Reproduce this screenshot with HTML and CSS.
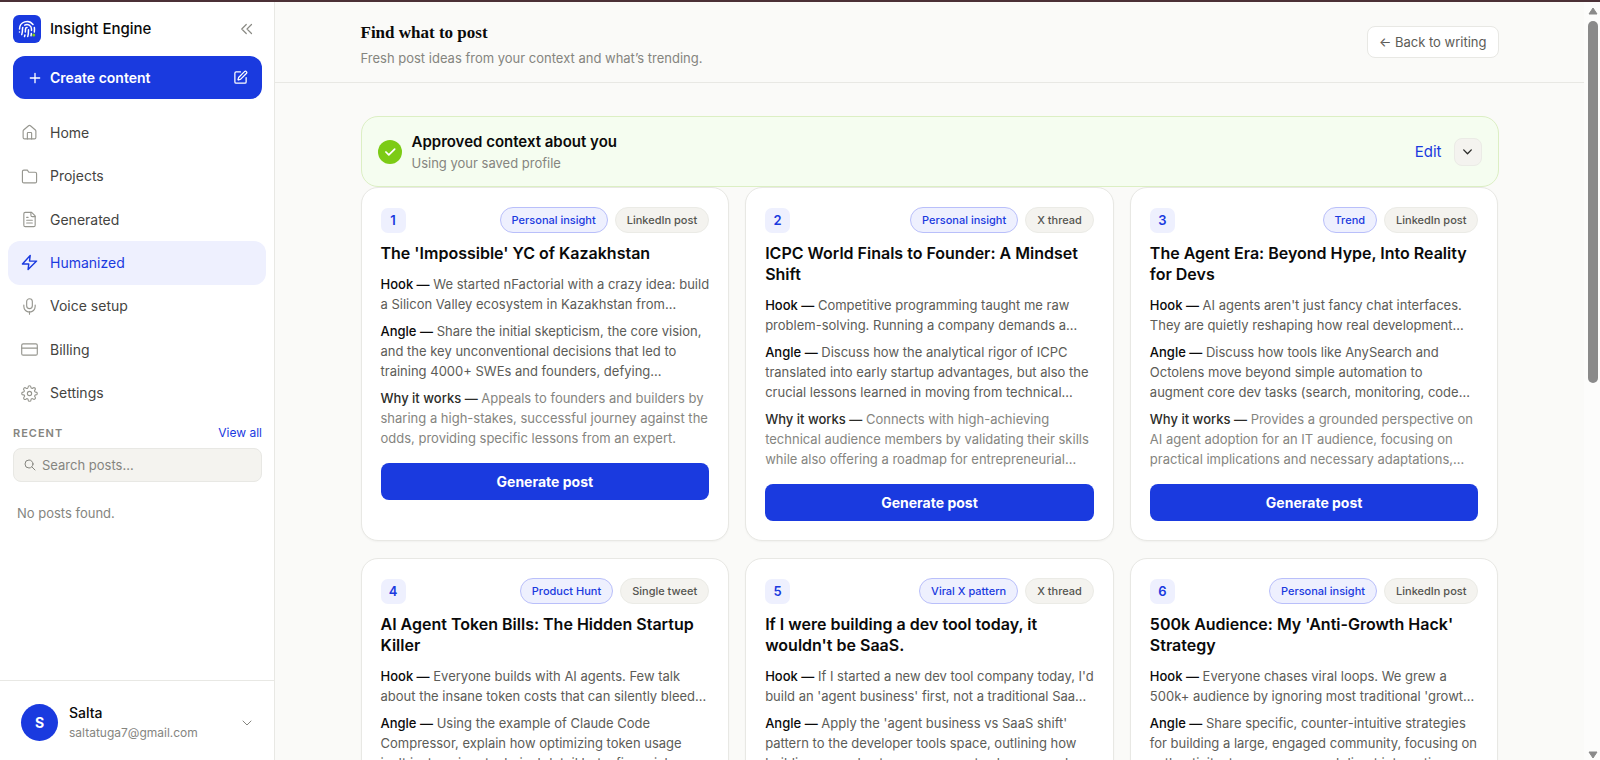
FILE: index.html
```html
<!DOCTYPE html>
<html lang="en">
  <head>
    <meta charset="UTF-8" />
    <meta name="viewport" content="width=device-width, initial-scale=1.0" />
    <title>Insight Engine - Find what to post</title>
    <link rel="stylesheet" href="styles.css" />
  </head>
  <body>
    <div class="app">
      <aside class="sidebar">
        <div class="brand">
          <span class="logo">
            <svg class="icon" width="18" height="18" viewBox="0 0 24 24" stroke-width="2">
              <path d="M12 10a2 2 0 0 0-2 2c0 1.02-.1 2.51-.26 4" />
              <path d="M14 13.12c0 2.38 0 6.38-1 8.88" />
              <path d="M17.29 21.02c.12-.6.43-2.3.5-3.02" />
              <path d="M2 12a10 10 0 0 1 18-6" />
              <path d="M2 16h.01" />
              <path d="M21.8 16c.2-2 .131-5.354 0-6" />
              <path d="M5 19.5C5.5 18 6 15 6 12a6 6 0 0 1 .34-2" />
              <path d="M8.65 22c.21-.66.45-1.32.57-2" />
              <path d="M9 6.8a6 6 0 0 1 9 5.2v2" />
              <circle class="logo-dot" cx="21" cy="20" r="1" />
            </svg>
          </span>
          <span class="brand-name">Insight Engine</span>
          <button class="icon-button" aria-label="Collapse sidebar">
            <svg class="icon" width="18" height="18" viewBox="0 0 24 24" stroke-width="1.6">
              <path d="m11 18-6-6 6-6M18 18l-6-6 6-6" />
            </svg>
          </button>
        </div>

        <button class="create-button">
          <svg class="icon" width="16" height="16" viewBox="0 0 24 24" stroke-width="2">
            <path d="M5 12h14M12 5v14" />
          </svg>
          <span>Create content</span>
          <svg class="icon" width="15" height="15" viewBox="0 0 24 24" stroke-width="2">
            <path d="M12 3H5a2 2 0 0 0-2 2v14a2 2 0 0 0 2 2h14a2 2 0 0 0 2-2v-7" />
            <path d="M18.375 2.625a1 1 0 0 1 3 3l-9.013 9.014a2 2 0 0 1-.853.505l-2.873.84a.5.5 0 0 1-.62-.62l.84-2.873a2 2 0 0 1 .506-.852z" />
          </svg>
        </button>

        <nav class="nav">
          <a href="#">
            <svg class="icon" width="17" height="17" viewBox="0 0 24 24" stroke-width="1.6">
              <path d="M15 21v-8a1 1 0 0 0-1-1h-4a1 1 0 0 0-1 1v8" />
              <path d="M3 10a2 2 0 0 1 .709-1.528l7-5.999a2 2 0 0 1 2.582 0l7 5.999A2 2 0 0 1 21 10v9a2 2 0 0 1-2 2H5a2 2 0 0 1-2-2z" />
            </svg>
            Home
          </a>
          <a href="#">
            <svg class="icon" width="17" height="17" viewBox="0 0 24 24" stroke-width="1.6">
              <path d="M22 19a2 2 0 0 1-2 2H4a2 2 0 0 1-2-2V5a2 2 0 0 1 2-2h5l2 3h9a2 2 0 0 1 2 2z" />
            </svg>
            Projects
          </a>
          <a href="#">
            <svg class="icon" width="17" height="17" viewBox="0 0 24 24" stroke-width="1.6">
              <path d="M15 2H6a2 2 0 0 0-2 2v16a2 2 0 0 0 2 2h12a2 2 0 0 0 2-2V7z" />
              <path d="M14 2v4a2 2 0 0 0 2 2h4M10 9H8M16 13H8M16 17H8" />
            </svg>
            Generated
          </a>
          <a href="#" class="active">
            <svg class="icon" width="17" height="17" viewBox="0 0 24 24" stroke-width="2">
              <path d="M13 2 2 14h9l-1 8 12-12h-10z" />
            </svg>
            Humanized
          </a>
          <a href="#">
            <svg class="icon" width="17" height="17" viewBox="0 0 24 24" stroke-width="1.6">
              <path d="M12 19v4M20 10v2a8 8 0 0 1-16 0v-2" />
              <rect x="8" y="1" width="8" height="14" rx="4" />
            </svg>
            Voice setup
          </a>
          <a href="#">
            <svg class="icon" width="17" height="17" viewBox="0 0 24 24" stroke-width="1.6">
              <rect x="1" y="4" width="22" height="16" rx="2" />
              <path d="M1 10h22" />
            </svg>
            Billing
          </a>
          <a href="#">
            <svg class="icon" width="17" height="17" viewBox="0 0 24 24" stroke-width="1.6">
              <circle cx="12" cy="12" r="3" />
              <path d="M19.4 15a1.65 1.65 0 0 0 .33 1.82l.06.06a2 2 0 1 1-2.83 2.83l-.06-.06a1.65 1.65 0 0 0-2.8 1.18V21a2 2 0 1 1-4 0v-.09a1.65 1.65 0 0 0-2.9-1.08l-.06.06a2 2 0 1 1-2.83-2.83l.06-.06A1.65 1.65 0 0 0 3.09 14H3a2 2 0 1 1 0-4h.09a1.65 1.65 0 0 0 1.18-2.82l-.06-.06a2 2 0 1 1 2.83-2.83l.06.06A1.65 1.65 0 0 0 10 3.09V3a2 2 0 1 1 4 0v.09a1.65 1.65 0 0 0 2.82 1.18l.06-.06a2 2 0 1 1 2.83 2.83l-.06.06A1.65 1.65 0 0 0 20.91 10H21a2 2 0 1 1 0 4h-.09a1.65 1.65 0 0 0-1.51 1z" />
            </svg>
            Settings
          </a>
        </nav>

        <div class="recent">
          <div class="recent-head">
            <h2>RECENT</h2>
            <a href="#">View all</a>
          </div>
          <label class="search">
            <svg class="icon" width="12" height="12" viewBox="0 0 24 24" stroke-width="2">
              <circle cx="10" cy="10" r="8" />
              <path d="m22 22-6-6" />
            </svg>
            <input type="text" placeholder="Search posts..." aria-label="Search posts" />
          </label>
          <p class="empty">No posts found.</p>
        </div>

        <button class="account">
          <span class="avatar">S</span>
          <span class="account-text">
            <span class="account-name">Salta</span>
            <span class="account-email">saltatuga7@gmail.com</span>
          </span>
          <svg class="icon" width="12" height="12" viewBox="0 0 24 24" stroke-width="2">
            <path d="m4 8 8 8 8-8" />
          </svg>
        </button>
      </aside>

      <main class="main">
        <header class="page-header">
          <div class="container header-row">
            <div>
              <h1>Find what to post</h1>
              <p>Fresh post ideas from your context and what’s trending.</p>
            </div>
            <a href="#" class="back-link">← Back to writing</a>
          </div>
        </header>

        <div class="container">
          <section class="context">
            <span class="check">
              <svg class="icon" width="14" height="14" viewBox="0 0 24 24" stroke-width="3">
                <path d="M20 7 10 17l-5-5" />
              </svg>
            </span>
            <div class="context-text">
              <h2>Approved context about you</h2>
              <p>Using your saved profile</p>
            </div>
            <a href="#" class="edit-link">Edit</a>
            <button class="toggle" aria-label="Expand context">
              <svg class="icon" width="13" height="13" viewBox="0 0 24 24" stroke-width="2.5">
                <path d="m5 9 7 7 7-7" />
              </svg>
            </button>
          </section>

          <section class="cards">
            <article class="card">
              <div class="card-head">
                <span class="number">1</span>
                <span class="tag tag-blue">Personal insight</span>
                <span class="tag">LinkedIn post</span>
              </div>
              <h3>The 'Impossible' YC of Kazakhstan</h3>
              <p><strong>Hook —</strong> We started nFactorial with a crazy idea: build<br />a Silicon Valley ecosystem in Kazakhstan from…</p>
              <p><strong>Angle —</strong> Share the initial skepticism, the core vision,<br />and the key unconventional decisions that led to<br />training 4000+ SWEs and founders, defying…</p>
              <p class="why"><strong>Why it works —</strong> Appeals to founders and builders by<br />sharing a high-stakes, successful journey against the<br />odds, providing specific lessons from an expert.</p>
              <button class="generate">Generate post</button>
            </article>

            <article class="card">
              <div class="card-head">
                <span class="number">2</span>
                <span class="tag tag-blue">Personal insight</span>
                <span class="tag">X thread</span>
              </div>
              <h3>ICPC World Finals to Founder: A Mindset<br />Shift</h3>
              <p><strong>Hook —</strong> Competitive programming taught me raw<br />problem-solving. Running a company demands a…</p>
              <p><strong>Angle —</strong> Discuss how the analytical rigor of ICPC<br />translated into early startup advantages, but also the<br />crucial lessons learned in moving from technical…</p>
              <p class="why"><strong>Why it works —</strong> Connects with high-achieving<br />technical audience members by validating their skills<br />while also offering a roadmap for entrepreneurial…</p>
              <button class="generate">Generate post</button>
            </article>

            <article class="card">
              <div class="card-head">
                <span class="number">3</span>
                <span class="tag tag-blue">Trend</span>
                <span class="tag">LinkedIn post</span>
              </div>
              <h3>The Agent Era: Beyond Hype, Into Reality<br />for Devs</h3>
              <p><strong>Hook —</strong> AI agents aren't just fancy chat interfaces.<br />They are quietly reshaping how real development…</p>
              <p><strong>Angle —</strong> Discuss how tools like AnySearch and<br />Octolens move beyond simple automation to<br />augment core dev tasks (search, monitoring, code…</p>
              <p class="why"><strong>Why it works —</strong> Provides a grounded perspective on<br />AI agent adoption for an IT audience, focusing on<br />practical implications and necessary adaptations,…</p>
              <button class="generate">Generate post</button>
            </article>

            <article class="card">
              <div class="card-head">
                <span class="number">4</span>
                <span class="tag tag-blue">Product Hunt</span>
                <span class="tag">Single tweet</span>
              </div>
              <h3>AI Agent Token Bills: The Hidden Startup<br />Killer</h3>
              <p><strong>Hook —</strong> Everyone builds with AI agents. Few talk<br />about the insane token costs that can silently bleed…</p>
              <p><strong>Angle —</strong> Using the example of Claude Code<br />Compressor, explain how optimizing token usage<br />isn't just a minor technical detail but a financial…</p>
              <button class="generate">Generate post</button>
            </article>

            <article class="card">
              <div class="card-head">
                <span class="number">5</span>
                <span class="tag tag-blue">Viral X pattern</span>
                <span class="tag">X thread</span>
              </div>
              <h3>If I were building a dev tool today, it<br />wouldn't be SaaS.</h3>
              <p><strong>Hook —</strong> If I started a new dev tool company today, I'd<br />build an 'agent business' first, not a traditional Saa…</p>
              <p><strong>Angle —</strong> Apply the 'agent business vs SaaS shift'<br />pattern to the developer tools space, outlining how<br />building around autonomous agents changes and…</p>
              <button class="generate">Generate post</button>
            </article>

            <article class="card">
              <div class="card-head">
                <span class="number">6</span>
                <span class="tag tag-blue">Personal insight</span>
                <span class="tag">LinkedIn post</span>
              </div>
              <h3>500k Audience: My 'Anti-Growth Hack'<br />Strategy</h3>
              <p><strong>Hook —</strong> Everyone chases viral loops. We grew a<br />500k+ audience by ignoring most traditional 'growt…</p>
              <p><strong>Angle —</strong> Share specific, counter-intuitive strategies<br />for building a large, engaged community, focusing on<br />authenticity, transparency, and direct interaction…</p>
              <button class="generate">Generate post</button>
            </article>
          </section>
        </div>
      </main>

      <div class="scrollbar" aria-hidden="true">
        <svg width="10" height="8" viewBox="0 0 10 8"><path d="M5 1 9 7H1z" /></svg>
        <div class="track"><div class="thumb"></div></div>
        <svg width="10" height="8" viewBox="0 0 10 8"><path d="M5 7 9 1H1z" /></svg>
      </div>
    </div>
  </body>
</html>
```
FILE: styles.css
```css
/* Global set-up */
* {
  box-sizing: border-box;
}

body {
  margin: 0;
  font-family: Inter, "Liberation Sans", sans-serif;
  font-size: 13px;
  line-height: 20px;
  color: #0a0a0a;
  background: #fafaf8;
}

h1,
h2,
h3,
p {
  margin: 0;
}

a {
  color: #1a3adf;
  text-decoration: none;
}

button {
  font-family: inherit;
  padding: 0;
  border: none;
  background: none;
  cursor: pointer;
}

.icon {
  flex: none;
  fill: none;
  stroke: currentColor;
  stroke-linecap: round;
  stroke-linejoin: round;
}

.app {
  display: flex;
  height: 100vh;
  overflow: hidden;
  border-top: 2px solid #4b3036;
}

/* Sidebar */
.sidebar {
  display: flex;
  flex-direction: column;
  flex: none;
  width: 275px;
  background: #fff;
  border-right: 1px solid #e8e8e4;
}

.brand {
  display: flex;
  align-items: center;
  gap: 9px;
  padding: 13px 18px 13px 13px;
}

.logo {
  display: flex;
  align-items: center;
  justify-content: center;
  width: 28px;
  height: 28px;
  border-radius: 6px;
  color: #fff;
  background: #1a3adf;
}

.logo-dot {
  fill: #84cc16;
  stroke: #84cc16;
}

.brand-name {
  flex: 1;
  font-size: 15px;
  font-weight: 500;
}

.icon-button {
  display: flex;
  color: #8a8a84;
}

.create-button {
  display: flex;
  align-items: center;
  gap: 7px;
  height: 43px;
  margin: 0 12px 0 13px;
  padding: 0 14px;
  border-radius: 12px;
  font-size: 14px;
  font-weight: 600;
  color: #fff;
  background: #1a3adf;
}

.create-button span {
  flex: 1;
  text-align: left;
}

.nav {
  display: flex;
  flex-direction: column;
  height: 304px;
  margin: 12px 8px 0;
}

.nav a {
  display: flex;
  flex: 1;
  align-items: center;
  gap: 12px;
  padding: 0 13px;
  border-radius: 12px;
  font-size: 14px;
  color: #44443f;
}

.nav .icon {
  color: #96968f;
}

.nav a.active,
.nav a.active .icon {
  color: #1a3adf;
}

.nav a.active {
  background: #eef0fe;
}

.recent {
  flex: 1;
  padding: 8px 12px 0 13px;
}

.recent-head {
  display: flex;
  justify-content: space-between;
  font-size: 12px;
}

.recent-head h2 {
  font-size: 11px;
  font-weight: 600;
  letter-spacing: 1px;
  color: #85857f;
}

.search {
  display: flex;
  align-items: center;
  gap: 6px;
  height: 34px;
  margin-top: 5px;
  padding: 0 10px;
  border: 1px solid #e8e8e4;
  border-radius: 8px;
  color: #85857f;
  background: #f4f3ef;
}

.search input {
  flex: 1;
  min-width: 0;
  padding: 0;
  border: none;
  outline: none;
  font: inherit;
  background: none;
}

.search input::placeholder {
  color: #85857f;
}

.empty {
  padding: 21px 4px;
  color: #85857f;
}

.account {
  display: flex;
  align-items: center;
  gap: 11px;
  height: 80px;
  padding: 4px 21px 0;
  border-top: 1px solid #e8e8e4;
  color: #85857f;
  text-align: left;
}

.avatar {
  display: flex;
  align-items: center;
  justify-content: center;
  width: 37px;
  height: 37px;
  border-radius: 50%;
  font-size: 14px;
  font-weight: 700;
  color: #fff;
  background: #1a3adf;
}

.account-text {
  display: flex;
  flex: 1;
  flex-direction: column;
  line-height: 20px;
}

.account-name {
  font-size: 14px;
  font-weight: 500;
  color: #0a0a0a;
}

.account-email {
  font-size: 12px;
}

/* Main column */
.main {
  flex: 1;
  min-width: 0;
  overflow: hidden;
}

.container {
  width: 87%;
  max-width: 1138px;
  margin: 0 auto;
}

.page-header {
  padding: 20px 0 14px;
  border-bottom: 1px solid #e8e8e4;
}

.header-row {
  display: flex;
  align-items: flex-start;
  justify-content: space-between;
}

.page-header h1 {
  font-family: "Liberation Serif", serif;
  font-size: 17px;
  font-weight: 600;
  line-height: 22px;
}

.page-header p {
  padding-top: 4px;
  color: #85857f;
}

.back-link {
  margin-top: 4px;
  padding: 5px 11px;
  border: 1px solid #e8e8e4;
  border-radius: 8px;
  color: #5c5c57;
  background: #fff;
}

.context {
  display: flex;
  align-items: center;
  gap: 10px;
  height: 71px;
  margin-top: 33px;
  padding: 0 16px;
  border: 1px solid #dcefc4;
  border-radius: 17px;
  background: #f5fdf0;
}

.check {
  display: flex;
  align-items: center;
  justify-content: center;
  width: 24px;
  height: 24px;
  border-radius: 50%;
  color: #fff;
  background: #7ccb15;
}

.context-text {
  flex: 1;
}

.context h2 {
  font-size: 15px;
  font-weight: 600;
  line-height: 22px;
}

.context p {
  color: #85857f;
}

.edit-link {
  font-size: 15px;
}

.toggle {
  display: flex;
  align-items: center;
  justify-content: center;
  width: 28px;
  height: 28px;
  margin-left: 2px;
  border: 1px solid #ebebe6;
  border-radius: 8px;
  color: #2c2c29;
  background: #f4f3ef;
}

/* Idea cards */
.cards {
  display: grid;
  grid-template-columns: repeat(3, 1fr);
  gap: 17px 16px;
}

.card {
  padding: 19px;
  border: 1px solid #e8e8e4;
  border-radius: 17px;
  background: #fff;
  box-shadow: 0 1px 2px rgba(0, 0, 0, 0.04);
}

.card-head {
  display: flex;
  align-items: center;
  gap: 7px;
}

.number {
  width: 25px;
  height: 25px;
  margin-right: auto;
  border-radius: 7px;
  font-weight: 600;
  line-height: 25px;
  text-align: center;
  color: #1a3adf;
  background: #eef0fe;
}

.tag {
  padding: 3px 11px;
  border: 1px solid #ebebe6;
  border-radius: 13px;
  font-size: 11px;
  font-weight: 500;
  line-height: 18px;
  color: #55554f;
  background: #f4f3ef;
}

.tag-blue {
  border-color: #b9bffa;
  color: #1a3adf;
  background: #eef0fe;
}

.card h3 {
  margin: 10px 0;
  font-size: 16px;
  font-weight: 600;
  line-height: 21px;
}

.card p {
  margin-bottom: 7px;
  white-space: nowrap;
  color: #5c5c57;
}

.card strong {
  font-weight: 500;
  color: #0a0a0a;
}

.card .why {
  color: #85857f;
}

.card .why strong {
  color: #2c2c29;
}

.generate {
  display: block;
  width: 100%;
  height: 37px;
  margin-top: 15px;
  border-radius: 8px;
  font-size: 14px;
  font-weight: 700;
  color: #fff;
  background: #1a3adf;
}

/* Scrollbar */
.scrollbar {
  display: flex;
  flex-direction: column;
  align-items: center;
  flex: none;
  width: 16px;
  padding: 5px 0 1px 2px;
  background: #fcfcfb;
}

.scrollbar svg {
  fill: #8a8a8a;
  stroke: #8a8a8a;
  stroke-linejoin: round;
}

.track {
  flex: 1;
  padding: 6px 0;
}

.thumb {
  width: 10px;
  height: 50%;
  border-radius: 5px;
  background: #8a8a8a;
}
```
